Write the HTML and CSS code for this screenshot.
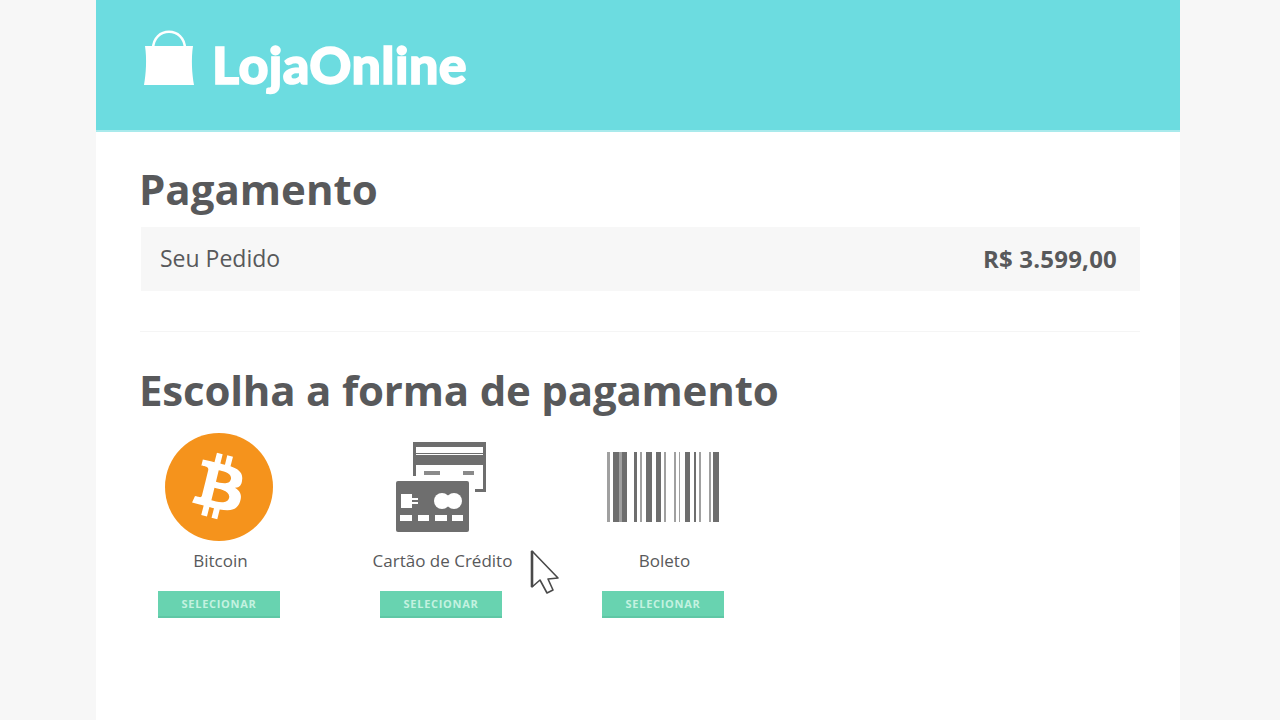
FILE: index.html
```html
<!DOCTYPE html>
<html lang="pt-BR">
<head>
  <meta charset="UTF-8">
  <title>LojaOnline - Pagamento</title>
  <link rel="stylesheet" href="styles.css">
</head>
<body>
  <div class="page">
    <header class="topbar">
      <svg class="bag" width="52" height="60" viewBox="0 0 52 60">
        <path d="M10 22 C10 -1 42 -1 42 22" fill="none" stroke="#fff" stroke-width="2.5"/>
        <path d="M2 19 H50 C48 32 49 47 51 58 H1 C3 47 4 32 2 19 Z" fill="#fff"/>
      </svg>
      <span class="logo">LojaOnline</span>
    </header>

    <main class="content">
      <h1>Pagamento</h1>
      <div class="order">
        <span class="order-label">Seu Pedido</span>
        <strong class="order-total">R$ 3.599,00</strong>
      </div>
      <hr>
      <h2>Escolha a forma de pagamento</h2>

      <div class="methods">
        <div class="method">
          <div class="method-icon">
            <svg width="108" height="108" viewBox="0 0 64 64">
              <circle cx="32" cy="32" r="32" fill="#f5931c"/>
              <path transform="translate(1 1) scale(0.97)" fill="#fff" d="M46.1,27.4c0.6-4.3-2.6-6.6-7.1-8.1l1.5-5.8l-3.5-0.9l-1.4,5.7c-0.9-0.2-1.9-0.4-2.8-0.7l1.4-5.7l-3.5-0.9l-1.5,5.8c-0.8-0.2-1.5-0.3-2.2-0.5l0,0l-4.9-1.2l-0.9,3.8c0,0,2.6,0.6,2.6,0.6c1.4,0.4,1.7,1.3,1.6,2l-1.6,6.6c0.1,0,0.2,0.1,0.4,0.1c-0.1,0-0.2-0.1-0.4-0.1l-2.3,9.2c-0.2,0.4-0.6,1.1-1.6,0.8c0,0-2.6-0.6-2.6-0.6l-1.8,4l4.6,1.1c0.9,0.2,1.7,0.4,2.5,0.6l-1.5,5.9l3.5,0.9l1.5-5.8c1,0.3,1.9,0.5,2.8,0.7l-1.5,5.8l3.5,0.9l1.5-5.9c6,1.1,10.5,0.7,12.4-4.7c1.5-4.4-0.1-6.9-3.2-8.6C44.2,32.6,45.9,31.1,46.1,27.4z M38.1,38.7c-1.1,4.4-8.4,2-10.8,1.4l1.9-7.7C31.6,33,39.3,34.1,38.1,38.7z M39.2,27.3c-1,4-7.1,2-9.1,1.5l1.7-7C33.8,22.3,40.2,23.2,39.2,27.3z"/>
            </svg>
          </div>
          <div class="method-name">Bitcoin</div>
          <button class="select">SELECIONAR</button>
        </div>

        <div class="method">
          <div class="method-icon">
            <svg width="92" height="92" viewBox="395 441 92 92">
              <!-- cartao de tras -->
              <path fill="#6e6e6e" d="M413 442 H486 V492 H475 V489 H483 V454 H416 V476 H413 Z"/>
              <rect x="413" y="455" width="73" height="10" fill="#6e6e6e"/>
              <rect x="416" y="447" width="67" height="6" fill="#fff"/>
              <rect x="424" y="471" width="16" height="4" fill="#8a8a8a"/>
              <rect x="463" y="471" width="11" height="4" fill="#8a8a8a"/>
              <!-- cartao da frente -->
              <rect x="396" y="481" width="73" height="51" rx="2" fill="#6e6e6e"/>
              <path fill="#fff" d="M401 494 H412 V498 H418 V500 H412 V502 H418 V504 H412 V508 H401 Z"/>
              <circle cx="442" cy="501" r="8" fill="#fff"/>
              <circle cx="454" cy="501" r="8" fill="#fff"/>
              <rect x="400" y="515" width="12" height="6" fill="#fff"/>
              <rect x="418" y="515" width="11" height="6" fill="#fff"/>
              <rect x="435" y="515" width="12" height="6" fill="#fff"/>
              <rect x="452" y="515" width="11" height="6" fill="#fff"/>
            </svg>
          </div>
          <div class="method-name">Cartão de Crédito</div>
          <button class="select">SELECIONAR</button>
        </div>

        <div class="method">
          <div class="method-icon">
            <svg width="112" height="70" viewBox="0 0 112 70">
              <g fill="#6e6e6e">
                <rect x="6" y="0" width="6" height="70"/>
                <rect x="15" y="0" width="5" height="70"/>
                <rect x="27" y="0" width="3" height="70"/>
                <rect x="39" y="0" width="6" height="70"/>
                <rect x="49" y="0" width="5" height="70"/>
                <rect x="78" y="0" width="5" height="70"/>
                <rect x="87" y="0" width="2" height="70"/>
                <rect x="106" y="0" width="6" height="70"/>
              </g>
              <g fill="#a0a0a0">
                <rect x="0" y="0" width="3" height="70"/>
                <rect x="12" y="0" width="3" height="70"/>
                <rect x="33" y="0" width="2" height="70"/>
                <rect x="57" y="0" width="2" height="70"/>
                <rect x="67" y="0" width="2" height="70"/>
                <rect x="72" y="0" width="1" height="70"/>
                <rect x="92" y="0" width="2" height="70"/>
                <rect x="102" y="0" width="2" height="70"/>
              </g>
            </svg>
          </div>
          <div class="method-name">Boleto</div>
          <button class="select">SELECIONAR</button>
        </div>
      </div>
    </main>

    <svg class="cursor" width="30" height="46" viewBox="0 0 30 46">
      <path d="M2 2 V38 L10 31 L17 44 L23 41 L18 30 L28 29 Z" fill="#fff" stroke="#4a4a4a" stroke-width="1.6" stroke-linejoin="round"/>
      <path d="M2 2 V38" fill="none" stroke="#4a4a4a" stroke-width="2.6"/>
    </svg>
  </div>
</body>
</html>
```

FILE: styles.css
```css
body {
  margin: 0;
  background-color: #f7f7f7;
  font-family: "Open Sans", "Liberation Sans", sans-serif;
  color: #58595b;
  overflow: hidden;
}

.page {
  width: 1084px;
  height: 720px;
  margin-left: 96px;
  background-color: #fff;
}

.topbar {
  height: 132px;
  box-sizing: border-box;
  display: flex;
  align-items: center;
  gap: 17px;
  padding: 0 0 2px 47px;
  background-color: #6cdce0;
  border-bottom: 2px solid #a9eaec;
}

.bag {
  margin-top: -14px;
}

.logo {
  font-family: Lato, sans-serif;
  font-size: 52px;
  font-weight: 900;
  letter-spacing: 0.4px;
  color: #fff;
  -webkit-text-stroke: 1.5px #fff;
}

.content {
  padding: 0 40px 0 44px;
}

h1,
h2 {
  margin: 0 0 0 -1px;
  font-weight: 700;
}

h1 {
  padding-top: 30px;
  font-size: 42px;
  line-height: 54px;
}

h2 {
  font-size: 42px;
  line-height: 54px;
  letter-spacing: -0.2px;
}

.order {
  display: flex;
  justify-content: space-between;
  align-items: center;
  height: 64px;
  margin-top: 11px;
  margin-left: 1px;
  padding: 0 23px 0 19px;
  background-color: #f7f7f7;
}

.order-label {
  font-size: 23px;
  margin-top: -2px;
}

.order-total {
  font-size: 24px;
  font-weight: 700;
  letter-spacing: 0.2px;
  margin-top: -2px;
}

hr {
  height: 1px;
  margin: 40px 0 31px;
  border: none;
  background-color: #f5f5f5;
}

.methods {
  display: grid;
  grid-template-columns: repeat(3, 158px);
  gap: 64px;
  margin-top: 16px;
}

.method {
  display: flex;
  flex-direction: column;
  align-items: center;
}

.method-icon {
  height: 108px;
  display: flex;
  align-items: center;
  justify-content: center;
}

.method-icon svg {
  filter: blur(0.4px);
}

.method-name {
  margin-top: 9px;
  padding-left: 3px;
  font-size: 17px;
  line-height: 22px;
}

.select {
  width: 122px;
  height: 27px;
  margin-top: 19px;
  padding: 0;
  border: none;
  border-bottom: 2px solid #5fc7a5;
  background-color: #68d3b0;
  color: #c4f2e0;
  font-family: "Open Sans", sans-serif;
  font-size: 11px;
  font-weight: 700;
  letter-spacing: 0.7px;
}

.cursor {
  position: absolute;
  left: 530px;
  top: 549px;
}
```
